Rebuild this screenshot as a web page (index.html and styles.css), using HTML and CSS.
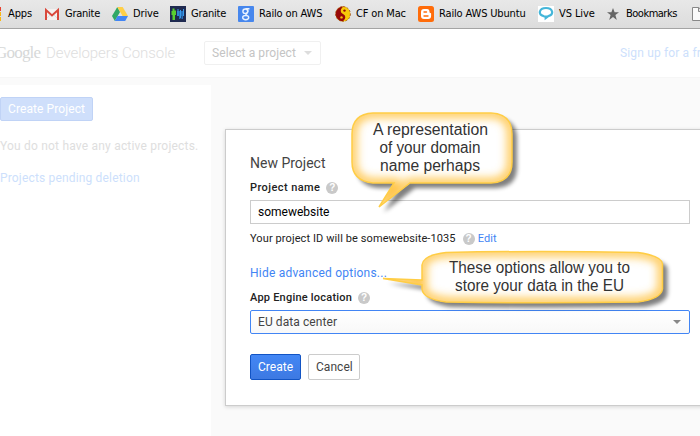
FILE: index.html
```html
<!DOCTYPE html>
<html lang="en">
<head>
<meta charset="utf-8">
<title>Google Developers Console</title>
<link rel="stylesheet" href="styles.css">
</head>
<body>
<nav class="bookmarks">
  <a class="bm apps"><svg width="2" height="16"><path fill="#e8412f" d="M0 1h1v4H0z"/><path fill="#fbb80f" d="M0 6h1v4H0zM0 11h1v4H0z"/></svg><span>Apps</span></a>
  <a class="bm"><svg width="15" height="16" viewBox="0 0 15 16"><path fill="#f4f1f0" d="M0 3h14v11H0z"/><path d="M2 12l4-4m6 4L8 8" stroke="#ddd"/><path fill="none" stroke="#d9483b" stroke-width="2" d="M1 14V4l6 5.5L13 4v10"/></svg><span class="t-granite">Granite</span></a>
  <a class="bm"><svg width="16" height="16" viewBox="0 0 16 16"><path fill="#30a866" d="M5.3 1L0 10l2.8 5L8 6z"/><path fill="#ffcf48" d="M5.3 1h5.4L16 10h-5.4z"/><path fill="#4285f4" d="M5.5 10H16l-2.8 5H2.8z"/></svg><span class="t-drive">Drive</span></a>
  <a class="bm"><svg width="16" height="16" viewBox="0 0 16 16"><path fill="#1f2a50" d="M0 0h16v16H0z"/><path fill="#59cf30" d="M2.500 2.500h2v2H6v4.500H5v5H2.500V9h-1V5h1z"/><path fill="#2670bd" d="M7 5h7v5h-1v3h-1.500v-3h-1v3H9v-3H7z"/><path fill="#3a9aea" d="M7.500 3h1v7h-1zM10 4h1v8h-1zM13 3h1v7h-1z"/></svg><span class="t-granite">Granite</span></a>
  <a class="bm"><svg width="16" height="16" viewBox="0 0 16 16"><rect width="16" height="16" rx="1" fill="#4787ed"/><g fill="none" stroke="#e9f2ff" stroke-width="1.400"><ellipse cx="7.300" cy="5.200" rx="2.400" ry="2.200"/><path d="M7.500 2.700H11.500M9.200 3.200Q11 6 8.200 7.600Q7.300 8.500 9 9.300"/><ellipse cx="7.700" cy="11.600" rx="3" ry="2.100"/></g></svg><span class="t-railo">Railo on AWS</span></a>
  <a class="bm"><svg width="16" height="16" viewBox="0 0 16 16"><circle cx="8" cy="8" r="7.400" fill="#f7c90a"/><path fill="#980808" d="M8 .6A7.400 7.400 0 0 0 8 15.400A3.700 3.700 0 0 0 8 8A3.700 3.700 0 0 1 8 .6z" transform="rotate(25 8 8)"/><circle cx="8" cy="8" r="7.400" fill="none" stroke="#a04a10" stroke-width=".8" stroke-dasharray="2 1.500"/><circle cx="9.500" cy="4.600" r="1.200" fill="#980808"/><circle cx="6.500" cy="11.400" r="1.200" fill="#f7c90a"/></svg><span class="t-cf">CF on Mac</span></a>
  <a class="bm"><svg width="16" height="16" viewBox="0 0 16 16"><rect width="16" height="16" rx="2.500" fill="#ff6c0a"/><path fill="#fff" d="M6 3h3q2.500 0 2.500 3 0 1 1 1 .6 0 .6.600V10q0 3-3 3H6q-3 0-3-3V6q0-3 3-3z"/><path stroke="#ff6c0a" stroke-width="1.400" stroke-linecap="round" d="M6 6h2.500M6 10h4"/></svg><span class="t-ubuntu">Railo AWS Ubuntu</span></a>
  <a class="bm"><svg width="16" height="16" viewBox="0 0 16 16"><path fill="#fff" d="M0 0h16v16H0z"/><path fill="none" stroke="#45b6d9" stroke-width="2.200" d="M6 10.300C-.5 8.500 1 2 8 2s8.500 6.500 2 8.300L7.700 12V10.500z"/></svg><span class="t-vs">VS Live</span></a>
  <a class="bm"><svg width="16" height="16" viewBox="0 0 16 16"><path fill="#656565" d="M8 2l1.600 4.200H14l-3.600 2.700L11.800 14 8 11l-3.800 3 1.400-5.100L2 6.200h4.400z"/></svg><span class="t-bookmarks">Bookmarks</span></a>
  <a class="bm"><svg width="13" height="16" viewBox="0 0 13 16"><path fill="#fafafa" stroke="#888" d="M.5 1.500h6l5 4v9H.5zM6.500 1.500v4h5"/></svg></a>
</nav>
<header class="topbar">
  <div class="brand"><span class="google">Google</span><span class="console">Developers Console</span></div>
  <div class="project-select"><span>Select a project</span><i class="caret"></i></div>
  <a class="signup">Sign up for a free trial</a>
</header>
<div class="workspace">
  <aside class="sidebar">
    <div class="create-project"><span>Create Project</span></div>
    <p class="none-active"><span>You do not have any active projects.</span></p>
    <a class="pending">Projects pending deletion</a>
  </aside>
  <main class="dialog">
    <h1><span>New Project</span></h1>
    <div class="label l-name"><span>Project name</span><i class="help">?</i></div>
    <div class="input"><span>somewebsite</span></div>
    <div class="project-id"><span>Your project ID will be somewebsite-1035</span><i class="help">?</i><a>Edit</a></div>
    <div class="advanced"><a>Hide advanced options...</a></div>
    <div class="label l-loc"><span>App Engine location</span><i class="help">?</i></div>
    <div class="select"><span>EU data center</span><i class="caret"></i></div>
    <div class="actions"><div class="btn primary"><span>Create</span></div><div class="btn"><span>Cancel</span></div></div>
  </main>
</div>
<svg class="callouts" width="700" height="436" viewBox="0 0 700 436">
  <defs>
    <path id="one" d="M373 113H491Q512 114 512 134V162Q512 182 491 183H410L379 207L394 183H373Q352 181 352 162V134Q352 114 373 113Z"/>
    <path id="two" d="M446 252.500Q542 250.500 638 252.500Q662 256 662.500 264V289Q661 299 638 302Q542 303.500 446 302Q423 299 422 289V285L383 278.500L422 280V265Q423 255 446 252.500Z"/>
    <clipPath id="clip-one"><use href="#one"/></clipPath>
    <clipPath id="clip-two"><use href="#two"/></clipPath>
    <filter id="glow" x="-20%" y="-30%" width="140%" height="160%"><feGaussianBlur stdDeviation="5"/></filter>
    <filter id="shade" x="-20%" y="-30%" width="140%" height="160%"><feGaussianBlur stdDeviation="2"/></filter>
  </defs>
  <use href="#one" transform="translate(5 5)" class="shadow"/>
  <use href="#one" fill="#fff"/>
  <g clip-path="url(#clip-one)"><use href="#one" class="glow"/></g>
  <use href="#one" class="edge"/>
  <use href="#two" transform="translate(5 5)" class="shadow"/>
  <use href="#two" fill="#fff"/>
  <g clip-path="url(#clip-two)"><use href="#two" class="glow"/></g>
  <use href="#two" class="edge"/>
  <g class="note">
    <text x="373" y="135" textLength="115" lengthAdjust="spacingAndGlyphs">A representation</text>
    <text x="379.500" y="153" textLength="101" lengthAdjust="spacingAndGlyphs">of your domain</text>
    <text x="380" y="171" textLength="100" lengthAdjust="spacingAndGlyphs">name perhaps</text>
    <text x="449" y="273" textLength="181" lengthAdjust="spacingAndGlyphs">These options allow you to</text>
    <text x="455" y="291" textLength="169" lengthAdjust="spacingAndGlyphs">store your data in the EU</text>
  </g>
</svg>
</body>
</html>
```
FILE: styles.css
```css
* { box-sizing: border-box; }
body {
  margin: 0;
  width: 700px;
  height: 436px;
  overflow: hidden;
  position: relative;
  background: #fff;
  font: 12px/16px Roboto, "Liberation Sans", sans-serif;
  color: #222;
}
i { font-style: normal; }
span, a { white-space: nowrap; }
.bookmarks {
  display: grid;
  grid-template-columns: 45px 67px 58px 68px 97px 83px 120px 67px 87px 13px;
  height: 29px;
  overflow: hidden;
  background: linear-gradient(#e8e8e8, #dcdcdc);
  border-bottom: 1px solid #a4a4a4;
  font: 11px/16px "DejaVu Sans Condensed", "DejaVu Sans", sans-serif;
  font-stretch: condensed;
  letter-spacing: -.1px;
  color: #000;
}
.bm { display: flex; gap: 5px; padding-top: 6px; }
.apps { gap: 6px; }
.bm svg { flex: none; display: block; }
.t-granite { letter-spacing: -.25px; }
.t-bookmarks { letter-spacing: -.5px; }
.t-drive, .t-ubuntu, .t-railo, .t-cf { letter-spacing: -.15px; }
.topbar {
  height: 48px;
  display: flex;
  align-items: center;
  overflow: hidden;
}
.brand { width: 204px; flex: none; display: flex; align-items: center; }
.google {
  width: 51px;
  margin-left: -5px;
  font: 17px/24px "Liberation Serif", serif;
  letter-spacing: -.8px;
  color: #d6d8d8;
}
.console { font-size: 15px; font-weight: 300; letter-spacing: -.05px; color: #dedede; }
.project-select {
  width: 117px;
  height: 24px;
  flex: none;
  display: flex;
  align-items: center;
  justify-content: space-between;
  padding: 0 8px 0 7px;
  border: 1px solid #f0f0f0;
  border-radius: 2px;
  color: #c4c4c4;
  letter-spacing: .1px;
}
.caret { border: 4px solid transparent; border-top-color: #ddd; border-bottom: 0; }
.signup { margin-left: 299px; color: #cddffc; letter-spacing: .15px; }
.workspace {
  height: 359px;
  display: flex;
  align-items: flex-start;
  background: #fafafa;
  border-top: 1px solid #f6f6f6;
}
.sidebar { width: 211px; height: 352px; flex: none; margin-top: 7px; padding-top: 12px; background: #fff; }
.create-project {
  width: 93px;
  height: 24px;
  padding: 3px 0 0 7px;
  border: 1px solid #c0d3f6;
  border-radius: 2px;
  background: #cfdffb;
  color: #fff;
  letter-spacing: .1px;
}
.none-active { margin: 17px 0 16px; color: #dedede; letter-spacing: .2px; }
.pending { color: #cddffc; letter-spacing: .17px; }
.dialog {
  width: 490px;
  height: 277px;
  flex: none;
  margin: 51px 0 0 14px;
  padding: 24px 0 0 24px;
  background: #fff;
  border: 1px solid #ccc;
  box-shadow: 0 1px 4px rgba(0,0,0,.15);
}
h1 { margin: 0; font-size: 14px; line-height: 18px; font-weight: 400; letter-spacing: 0; color: #444; }
.label { display: flex; align-items: center; height: 16px; font-size: 11px; font-weight: 500; }
.l-name { margin-top: 8px; gap: 6px; letter-spacing: .42px; }
.l-loc { margin-top: 9px; gap: 6px; letter-spacing: .22px; }
.help {
  width: 12px;
  height: 12px;
  flex: none;
  border-radius: 50%;
  background: #c9c9c9;
  color: #fff;
  font: bold 10px/12px "Liberation Sans", sans-serif;
  letter-spacing: 0;
  text-align: center;
}
.input, .select {
  width: 440px;
  height: 24px;
  display: flex;
  align-items: center;
  padding-left: 7px;
  border: 1px solid #ccc;
  background: #fff;
  color: #000;
}
.input { margin-top: 4px; letter-spacing: 0; }
.project-id { display: flex; align-items: center; margin-top: 7px; height: 16px; font-size: 11px; letter-spacing: .1px; }
.project-id .help { margin: 0 3px 0 7px; }
.project-id a, .advanced a { color: #4285f4; }
.advanced { height: 16px; margin-top: 18px; letter-spacing: .22px; }
.select {
  justify-content: space-between;
  margin-top: 4px;
  padding-right: 8px;
  border-color: #4285f4;
  border-radius: 2px;
  background: linear-gradient(#fff, #f8f8f8);
  color: #444;
  letter-spacing: .08px;
}
.select .caret { border-top-color: #888; }
.actions { display: flex; gap: 7px; margin-top: 20px; }
.btn {
  width: 52px;
  height: 26px;
  padding: 4px 0 0 7px;
  border: 1px solid #ccc;
  border-radius: 2px;
  color: #444;
  letter-spacing: .05px;
}
.primary { width: 51px; background: linear-gradient(#4387f5, #3d79e2); border-color: #1254c4; color: #fff; }
.callouts { position: absolute; left: 0; top: 0; }
.shadow { fill: #000; opacity: .5; filter: url(#shade); }
.glow { fill: none; stroke: #ffc548; stroke-width: 9px; filter: url(#glow); }
.edge { fill: none; stroke: #ffcd45; stroke-width: 1.5px; }
.note { font: 16px "Liberation Sans", Arial, sans-serif; fill: #333; }
```
